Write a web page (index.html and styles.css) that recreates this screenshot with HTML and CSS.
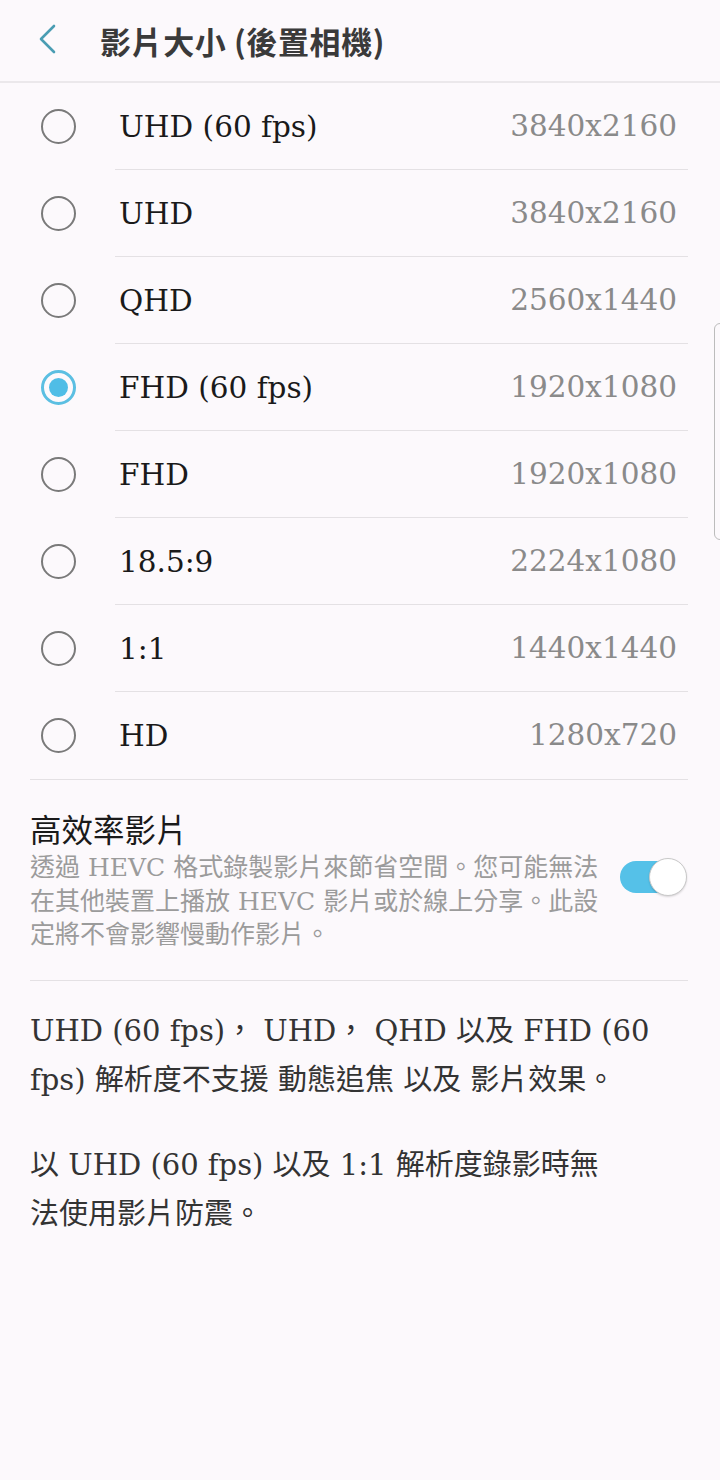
FILE: index.html
```html
<!DOCTYPE html>
<html lang="zh-Hant">
<head>
<meta charset="utf-8">
<title>影片大小 (後置相機)</title>
<link rel="stylesheet" href="styles.css">
</head>
<body>
<div class="screen">
  <header class="appbar">
    <svg class="back" width="24" height="32" viewBox="0 0 24 32"><path d="M17 3 L4 16 L17 29" fill="none" stroke="#4a9db3" stroke-width="2.6" stroke-linecap="round" stroke-linejoin="round"/></svg>
    <h1 class="title">影片大小 (後置相機)</h1>
  </header>

  <ul class="options">
    <li class="row"><span class="radio"></span><div class="row-body"><span class="label">UHD (60 fps)</span><span class="value">3840x2160</span></div></li>
    <li class="row"><span class="radio"></span><div class="row-body"><span class="label">UHD</span><span class="value">3840x2160</span></div></li>
    <li class="row"><span class="radio"></span><div class="row-body"><span class="label">QHD</span><span class="value">2560x1440</span></div></li>
    <li class="row"><span class="radio checked"></span><div class="row-body"><span class="label">FHD (60 fps)</span><span class="value">1920x1080</span></div></li>
    <li class="row"><span class="radio"></span><div class="row-body"><span class="label">FHD</span><span class="value">1920x1080</span></div></li>
    <li class="row"><span class="radio"></span><div class="row-body"><span class="label">18.5:9</span><span class="value">2224x1080</span></div></li>
    <li class="row"><span class="radio"></span><div class="row-body"><span class="label">1:1</span><span class="value">1440x1440</span></div></li>
    <li class="row last"><span class="radio"></span><div class="row-body"><span class="label">HD</span><span class="value">1280x720</span></div></li>
  </ul>

  <section class="hevc">
    <div class="hevc-text">
      <div class="hevc-title">高效率影片</div>
      <div class="hevc-desc">透過 HEVC 格式錄製影片來節省空間。您可能無法<br>在其他裝置上播放 HEVC 影片或於線上分享。此設<br>定將不會影響慢動作影片。</div>
    </div>
    <div class="toggle"><span class="thumb"></span></div>
  </section>

  <div class="notes">
    <p>UHD (60 fps)， UHD， QHD 以及 FHD (60<br>fps) 解析度不支援 動態追焦 以及 影片效果。</p>
    <p>以 UHD (60 fps) 以及 1:1 解析度錄影時無<br>法使用影片防震。</p>
  </div>

  <div class="scrollbar"></div>
</div>
</body>
</html>
```

FILE: styles.css
```css
html, body {
  margin: 0;
  padding: 0;
  background: #fcf9fc;
}
body {
  font-family: "DejaVu Serif", "Noto Sans CJK TC", serif;
  color: #1c1c1c;
}
.screen {
  position: relative;
  width: 720px;
  height: 1480px;
  overflow: hidden;
}
.appbar {
  height: 81px;
  display: flex;
  align-items: center;
  border-bottom: 2px solid #ebe8eb;
  box-sizing: content-box;
}
.back {
  margin-left: 37px;
  margin-top: -4px;
}
.title {
  margin: 0 0 0 39px;
  margin-top: 0;
  font-family: "Noto Sans CJK TC", sans-serif;
  font-weight: 700;
  font-size: 31px;
  line-height: 40px;
  color: #3a3a3a;
  letter-spacing: 0.6px;
}
.options {
  list-style: none;
  margin: 0;
  padding: 0;
}
.row {
  display: flex;
  align-items: center;
  height: 87px;
  padding-left: 41px;
}
.radio {
  width: 35px;
  height: 35px;
  box-sizing: border-box;
  border: 2.5px solid #7a7a7a;
  border-radius: 50%;
  flex: none;
  display: flex;
  align-items: center;
  justify-content: center;
}
.radio.checked {
  border: 3px solid #5bbfe2;
}
.radio.checked::after {
  content: "";
  width: 19px;
  height: 19px;
  border-radius: 50%;
  background: #4fbde6;
}
.row-body {
  flex: 1;
  align-self: stretch;
  display: flex;
  align-items: center;
  justify-content: space-between;
  margin-left: 39px;
  margin-right: 32px;
  padding-left: 4px;
  padding-right: 11px;
  border-bottom: 1px solid #e4e1e4;
}
.row.last .row-body {
  border-bottom: none;
}
.row.last {
  height: 86px;
  padding-bottom: 1px;
  border-bottom: 1px solid #e4e1e4;
  margin: 0 32px 0 30px;
  padding-left: 11px;
}
.row.last .row-body {
  margin-right: 0;
}
.label {
  font-size: 29.5px;
  color: #1a1a1a;
  margin-top: 2px;
}
.value {
  font-size: 29.5px;
  color: #8a8a8a;
  margin-top: 0;
}
.hevc {
  display: flex;
  align-items: center;
  margin: 0 32px 0 30px;
  padding: 32px 0 28px;
  border-bottom: 1px solid #e4e1e4;
}
.hevc-text {
  flex: 1;
}
.hevc-title {
  font-size: 31.5px;
  line-height: 38px;
  color: #1a1a1a;
}
.hevc-desc {
  margin-top: 1px;
  font-size: 25px;
  line-height: 33.5px;
  color: #9b9b9b;
}
.toggle {
  position: relative;
  width: 62px;
  height: 32px;
  border-radius: 16px;
  background: #55c1e8;
  margin-top: -10px;
  margin-right: 6px;
  flex: none;
}
.thumb {
  position: absolute;
  right: -5px;
  top: -3px;
  width: 38px;
  height: 38px;
  box-sizing: border-box;
  border-radius: 50%;
  background: #ffffff;
  border: 1.5px solid #c9c9c9;
  box-shadow: 0 1px 2px rgba(0,0,0,0.15);
}
.notes {
  margin: 0 30px;
  padding-top: 26px;
}
.notes p {
  margin: 0 0 36px;
  font-size: 29px;
  line-height: 49px;
  color: #333333;
}
.scrollbar {
  position: absolute;
  right: -6px;
  top: 323px;
  width: 12px;
  height: 217px;
  box-sizing: border-box;
  border: 1.5px solid #bcbcbc;
  border-radius: 8px;
}
```
